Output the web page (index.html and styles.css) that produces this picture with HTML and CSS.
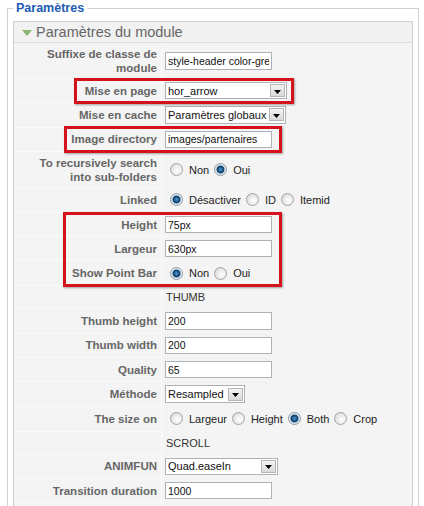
FILE: index.html
```
<!DOCTYPE html>
<html lang="fr">
<head>
<meta charset="utf-8">
<title>Paramètres</title>
<link rel="stylesheet" href="styles.css">
</head>
<body>
<fieldset class="params">
  <legend class="params-legend">Paramètres</legend>
  <div class="pane">
    <div class="pane-title">
      <svg class="toggle" width="10" height="6" viewBox="0 0 10 6"><polygon points="0,0 10,0 5,6" fill="#8db46c"/></svg>
      <span>Paramètres du module</span>
    </div>
    <table class="paramlist">
      <tr class="r-two">
        <td class="key">Suffixe de classe de module</td>
        <td class="val"><input class="text" type="text" value="style-header color-grey"></td>
      </tr>
      <tr>
        <td class="key">Mise en page</td>
        <td class="val"><div class="select w-layout"><span class="sel-txt">hor_arrow</span><span class="arrow"><svg width="7" height="4" viewBox="0 0 7 4"><polygon points="0,0 7,0 3.5,4" fill="#000"/></svg></span></div></td>
      </tr>
      <tr>
        <td class="key">Mise en cache</td>
        <td class="val"><div class="select w-cache"><span class="sel-txt">Paramètres globaux</span><span class="arrow"><svg width="7" height="4" viewBox="0 0 7 4"><polygon points="0,0 7,0 3.5,4" fill="#000"/></svg></span></div></td>
      </tr>
      <tr>
        <td class="key">Image directory</td>
        <td class="val"><input class="text" type="text" value="images/partenaires"></td>
      </tr>
      <tr class="r-two">
        <td class="key">To recursively search into sub-folders</td>
        <td class="val"><div class="radios"><input class="radio" type="radio" name="rec"><label>Non</label><input class="radio" type="radio" name="rec" checked><label>Oui</label></div></td>
      </tr>
      <tr>
        <td class="key">Linked</td>
        <td class="val"><div class="radios"><input class="radio" type="radio" name="lnk" checked><label>Désactiver</label><input class="radio" type="radio" name="lnk"><label>ID</label><input class="radio" type="radio" name="lnk"><label>Itemid</label></div></td>
      </tr>
      <tr>
        <td class="key">Height</td>
        <td class="val"><input class="text" type="text" value="75px"></td>
      </tr>
      <tr>
        <td class="key">Largeur</td>
        <td class="val"><input class="text" type="text" value="630px"></td>
      </tr>
      <tr>
        <td class="key">Show Point Bar</td>
        <td class="val"><div class="radios"><input class="radio" type="radio" name="spb" checked><label>Non</label><input class="radio" type="radio" name="spb"><label>Oui</label></div></td>
      </tr>
      <tr>
        <td class="key"></td>
        <td class="val"><div class="spacer">THUMB</div></td>
      </tr>
      <tr>
        <td class="key">Thumb height</td>
        <td class="val"><input class="text" type="text" value="200"></td>
      </tr>
      <tr>
        <td class="key">Thumb width</td>
        <td class="val"><input class="text" type="text" value="200"></td>
      </tr>
      <tr>
        <td class="key">Quality</td>
        <td class="val"><input class="text" type="text" value="65"></td>
      </tr>
      <tr>
        <td class="key">Méthode</td>
        <td class="val"><div class="select w-method"><span class="sel-txt">Resampled</span><span class="arrow"><svg width="7" height="4" viewBox="0 0 7 4"><polygon points="0,0 7,0 3.5,4" fill="#000"/></svg></span></div></td>
      </tr>
      <tr>
        <td class="key">The size on</td>
        <td class="val"><div class="radios"><input class="radio" type="radio" name="size"><label>Largeur</label><input class="radio" type="radio" name="size"><label>Height</label><input class="radio" type="radio" name="size" checked><label>Both</label><input class="radio" type="radio" name="size"><label>Crop</label></div></td>
      </tr>
      <tr>
        <td class="key"></td>
        <td class="val"><div class="spacer">SCROLL</div></td>
      </tr>
      <tr>
        <td class="key">ANIMFUN</td>
        <td class="val"><div class="select w-anim"><span class="sel-txt">Quad.easeIn</span><span class="arrow"><svg width="7" height="4" viewBox="0 0 7 4"><polygon points="0,0 7,0 3.5,4" fill="#000"/></svg></span></div></td>
      </tr>
      <tr>
        <td class="key">Transition duration</td>
        <td class="val"><input class="text" type="text" value="1000"></td>
      </tr>
      <tr>
        <td class="key"></td>
        <td class="val"><div class="spacer"></div></td>
      </tr>
    </table>
  </div>
</fieldset>
<div class="mark mark-layout"></div>
<div class="mark mark-dir"></div>
<div class="mark mark-size"></div>
</body>
</html>
```
FILE: styles.css
```
html, body {
  margin: 0;
  padding: 0;
  background: #fff;
  font-family: "Liberation Sans", Arial, sans-serif;
  font-size: 11px;
  color: #333;
}

.params {
  margin: 0 5px 0 7px;
  padding: 4px 5px 0 5px;
  border: 1px solid #d2d2d2;
  border-bottom: none;
}

.params-legend {
  padding: 0 3px;
  color: #1d5cb5;
  font-weight: bold;
  font-size: 12.5px;
  line-height: 17px;
}

.pane {
  border: 1px solid #cfcfcf;
  border-bottom: none;
  background: #f4f4f4;
}

.pane-title {
  display: flex;
  align-items: center;
  height: 20px;
  padding-left: 8px;
  border-bottom: 1px solid #dcdcdc;
  background: #f1f1f1;
  color: #666;
  font-size: 14.5px;
}

.toggle {
  margin-right: 4px;
  margin-top: 1px;
}

.paramlist {
  width: 100%;
  border-collapse: separate;
  border-spacing: 0;
}

.paramlist td {
  padding: 3px;
  vertical-align: middle;
}

.paramlist .r-two td {
  padding-top: 4px;
}

.key {
  width: 140px;
  padding-right: 4px !important;
  text-align: right;
  font-weight: bold;
  font-size: 11.5px;
  color: #666;
  line-height: 14px;
  border-right: 1px solid #fbfbfb;
  border-bottom: 1px solid #fbfbfb;
}

.val {
  line-height: 14px;
  border-bottom: 1px solid #f4f4f4;
}

.text {
  display: block;
  box-sizing: border-box;
  width: 107px;
  height: 17.3px;
  margin: 0;
  padding: 0 2px;
  border: 1px solid #adb2b6;
  background: #fff;
  font-family: "Liberation Sans", Arial, sans-serif;
  font-size: 10.5px;
  color: #111;
  outline: none;
}

.select {
  display: flex;
  align-items: center;
  box-sizing: border-box;
  height: 17.3px;
  padding-left: 2px;
  border: 1px solid #adb2b6;
  background: #fff;
  color: #111;
}

.w-layout { width: 122px; }
.w-cache { width: 121px; }
.w-method { width: 80px; }
.w-anim { width: 113px; }

.sel-txt {
  flex: 1;
  white-space: nowrap;
  overflow: hidden;
}

.arrow {
  display: flex;
  align-items: center;
  justify-content: center;
  box-sizing: border-box;
  width: 15px;
  height: 13px;
  margin-right: 1px;
  padding-top: 2px;
  border: 1px solid #b6b6b6;
  background: linear-gradient(#f3f3f3, #d9d9d9);
}

.radios {
  display: flex;
  align-items: center;
  height: 18px;
  color: #222;
}

.radio {
  appearance: none;
  -webkit-appearance: none;
  box-sizing: border-box;
  width: 13px;
  height: 13px;
  margin: 0 6px 0 5px;
  border-radius: 50%;
  border: 1px solid #a3a3a3;
  background: radial-gradient(circle at 60% 60%, #ffffff 0, #ececec 45%, #cfcfcf 100%);
}

.radio:checked {
  border-color: #8a9aa8;
  background: radial-gradient(circle at 50% 50%, #5b9bd0 0, #1f5f95 2px, #123f68 3.5px, #c6d3de 4.3px, #ffffff 6px);
}

.spacer {
  height: 16px;
  line-height: 16px;
  padding-left: 1px;
  color: #333;
}

.mark {
  position: absolute;
  box-sizing: border-box;
  border: 3px solid #d3121c;
  box-shadow: 1px 1px 2px rgba(0, 0, 0, 0.35);
}

.mark-layout {
  left: 74px;
  top: 78px;
  width: 220px;
  height: 26px;
}

.mark-dir {
  left: 64px;
  top: 126px;
  width: 218px;
  height: 27px;
}

.mark-size {
  left: 63px;
  top: 212px;
  width: 219px;
  height: 75px;
}
```
